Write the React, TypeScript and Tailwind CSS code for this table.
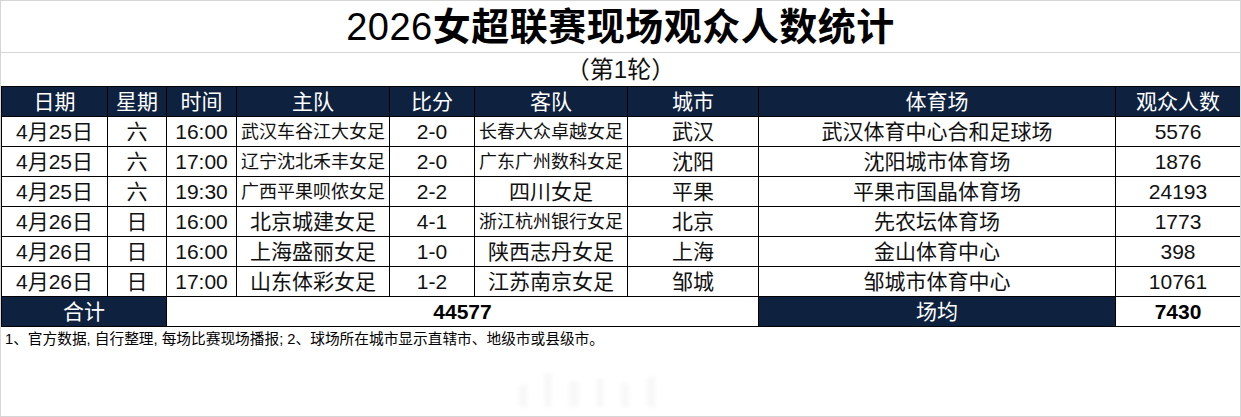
import React from "react";

const FONT = '"Liberation Sans", "Noto Sans CJK SC", sans-serif';

type Row = {
  date: string;
  wd: string;
  time: string;
  home: string;
  score: string;
  away: string;
  city: string;
  venue: string;
  att: string;
};

const rows: Row[] = [
  { date: "4月25日", wd: "六", time: "16:00", home: "武汉车谷江大女足", score: "2-0", away: "长春大众卓越女足", city: "武汉", venue: "武汉体育中心合和足球场", att: "5576" },
  { date: "4月25日", wd: "六", time: "17:00", home: "辽宁沈北禾丰女足", score: "2-0", away: "广东广州数科女足", city: "沈阳", venue: "沈阳城市体育场", att: "1876" },
  { date: "4月25日", wd: "六", time: "19:30", home: "广西平果呗侬女足", score: "2-2", away: "四川女足", city: "平果", venue: "平果市国晶体育场", att: "24193" },
  { date: "4月26日", wd: "日", time: "16:00", home: "北京城建女足", score: "4-1", away: "浙江杭州银行女足", city: "北京", venue: "先农坛体育场", att: "1773" },
  { date: "4月26日", wd: "日", time: "16:00", home: "上海盛丽女足", score: "1-0", away: "陕西志丹女足", city: "上海", venue: "金山体育中心", att: "398" },
  { date: "4月26日", wd: "日", time: "17:00", home: "山东体彩女足", score: "1-2", away: "江苏南京女足", city: "邹城", venue: "邹城市体育中心", att: "10761" },
];

const headers = ["日期", "星期", "时间", "主队", "比分", "客队", "城市", "体育场", "观众人数"];
const widths = [106, 59, 70, 153, 85, 153, 131, 357, 125];

function teamSize(name: string) {
  return name.length >= 8 ? "text-[18px]" : "text-[21px]";
}

export default function App() {
  const cell = "border border-black p-0 text-center whitespace-nowrap leading-none";
  return (
    <div
      className="relative w-[1241px] h-[417px] bg-white border border-[#d6d6d6] box-border overflow-hidden text-[#111]"
      style={{ fontFamily: FONT }}
    >
      <div className="h-[52px] border-b border-[#d6d6d6] flex items-center justify-center">
        <span className="text-[38px] leading-none tracking-[0.5px] text-black">
          <span className="font-normal">2026</span>
          <span className="font-bold">女超联赛现场观众人数统计</span>
        </span>
      </div>
      <div className="h-[33px] flex items-center justify-center">
        <span className="text-[24px] leading-none">（第1轮）</span>
      </div>
      <table className="table-fixed border-collapse w-[1239px]">
        <colgroup>
          {widths.map((w, i) => (
            <col key={i} style={{ width: w }} />
          ))}
        </colgroup>
        <thead>
          <tr className="h-[30px] bg-[#0e2240] text-white">
            {headers.map((h) => (
              <th key={h} className={`${cell} font-normal text-[21px]`}>
                {h}
              </th>
            ))}
          </tr>
        </thead>
        <tbody>
          {rows.map((r, i) => (
            <tr key={i} className="h-[30px] text-[21px]">
              <td className={cell}>{r.date}</td>
              <td className={cell}>{r.wd}</td>
              <td className={cell}>{r.time}</td>
              <td className={`${cell} ${teamSize(r.home)}`}>{r.home}</td>
              <td className={cell}>{r.score}</td>
              <td className={`${cell} ${teamSize(r.away)}`}>{r.away}</td>
              <td className={cell}>{r.city}</td>
              <td className={cell}>{r.venue}</td>
              <td className={cell}>{r.att}</td>
            </tr>
          ))}
          <tr className="h-[30px] text-[21px]">
            <td colSpan={2} className={`${cell} bg-[#0e2240] text-white`}>合计</td>
            <td colSpan={5} className={`${cell} font-bold text-black`}>44577</td>
            <td className={`${cell} bg-[#0e2240] text-white`}>场均</td>
            <td className={`${cell} font-bold text-black`}>7430</td>
          </tr>
        </tbody>
      </table>
      <div className="pl-[4px] pt-[4px] text-[14.7px] leading-[17px] text-black">
        1、官方数据, 自行整理, 每场比赛现场播报; 2、球场所在城市显示直辖市、地级市或县级市。
      </div>
      <div className="absolute left-[518px] top-[372px] flex items-end gap-[18px] opacity-30 blur-[2px] pointer-events-none">
        <div className="w-[8px] h-[22px] bg-[#e6e6e6]" />
        <div className="w-[6px] h-[34px] bg-[#e2e2e2]" />
        <div className="w-[10px] h-[26px] bg-[#e8e8e8]" />
        <div className="w-[6px] h-[28px] bg-[#e4e4e4]" />
        <div className="w-[8px] h-[24px] bg-[#e8e8e8]" />
        <div className="w-[8px] h-[30px] bg-[#e6e6e6]" />
      </div>
    </div>
  );
}
